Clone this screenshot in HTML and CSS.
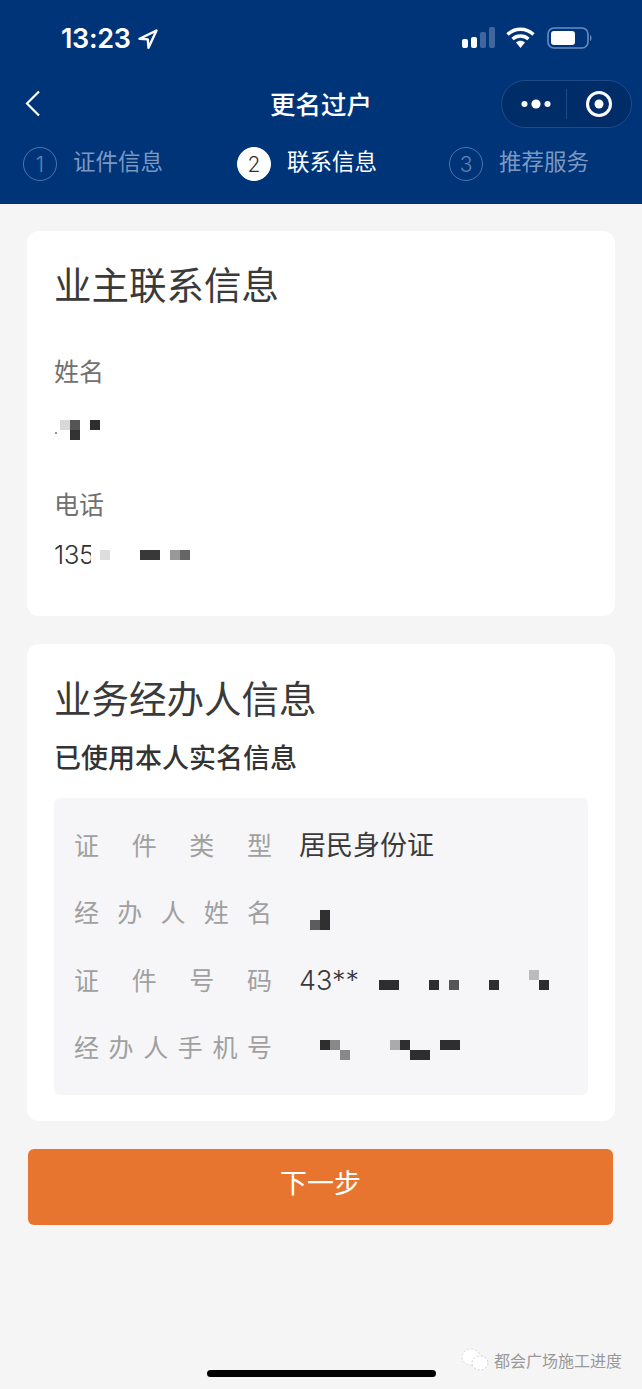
FILE: index.html
```html
<!DOCTYPE html>
<html lang="zh-CN">
<head>
    <meta charset="UTF-8">
    <meta name="viewport" content="width=device-width, initial-scale=1.0">
    <title>更名过户</title>
    <link rel="stylesheet" href="styles.css">
</head>
<body>
    <div class="page">
        <header class="header">
            <div class="status">
                <div class="status-left">
                    <span class="time">13:23</span>
                    <svg class="arrow" width="20" height="20" viewBox="0 0 20 20"><path d="M18.500 1.500 L1.500 9.800 L9.800 10.400 L10.500 18.800 Z" fill="none" stroke="#fff" stroke-width="2.400" stroke-linejoin="round"/></svg>
                </div>
                <div class="status-right">
                    <svg width="33" height="21" viewBox="0 0 33 21">
                        <rect x="0" y="12" width="6" height="9" rx="2" fill="#fff"/>
                        <rect x="9" y="10" width="6" height="11" rx="2" fill="#fff"/>
                        <rect x="18" y="5" width="6" height="16" rx="2" fill="#41669e"/>
                        <rect x="27" y="0" width="6" height="21" rx="2" fill="#41669e"/>
                    </svg>
                    <svg class="wifi" width="29" height="21" viewBox="0 0 29 21">
                        <path d="M1.500 7.500 C9 0.500 20 0.500 27.500 7.500" fill="none" stroke="#fff" stroke-width="3.400"/>
                        <path d="M6.500 12 C11 8 18 8 22.500 12" fill="none" stroke="#fff" stroke-width="3.400"/>
                        <path d="M10 15.500 C12.500 13.200 16.500 13.200 19 15.500 L14.500 21 Z" fill="#fff"/>
                    </svg>
                    <svg class="battery" width="46" height="22" viewBox="0 0 46 22">
                        <rect x="1" y="1" width="40" height="20" rx="6" fill="none" stroke="#6b8dbd" stroke-width="1.600"/>
                        <rect x="4" y="4" width="24" height="14" rx="3" fill="#fff"/>
                        <path d="M43 8 C45 9 45 13 43 14 Z" fill="#6b8dbd"/>
                    </svg>
                </div>
            </div>
            <div class="nav">
                <svg class="back" width="16" height="27" viewBox="0 0 16 27"><path d="M14 1.500 L2 13.500 L14 25.500" fill="none" stroke="#fff" stroke-width="2.200"/></svg>
                <div class="nav-title">更名过户</div>
                <div class="capsule">
                    <svg width="30" height="10" viewBox="0 0 30 10">
                        <circle cx="3.500" cy="5" r="3" fill="#fff"/>
                        <circle cx="15" cy="5" r="4.600" fill="#fff"/>
                        <circle cx="26.500" cy="5" r="3" fill="#fff"/>
                    </svg>
                    <span class="capsule-line"></span>
                    <svg width="28" height="28" viewBox="0 0 28 28">
                        <circle cx="14" cy="14" r="11.500" fill="none" stroke="#fff" stroke-width="3"/>
                        <circle cx="14" cy="14" r="4.500" fill="#fff"/>
                    </svg>
                </div>
            </div>
            <div class="steps">
                <div class="step"><span class="step-num">1</span><span class="step-text">证件信息</span></div>
                <div class="step active"><span class="step-num">2</span><span class="step-text">联系信息</span></div>
                <div class="step"><span class="step-num">3</span><span class="step-text">推荐服务</span></div>
            </div>
        </header>

        <main class="content">
            <section class="card card-owner">
                <h2 class="card-title">业主联系信息</h2>
                <div class="field-label">姓名</div>
                <div class="field-value name-value">
                    <svg width="50" height="24" viewBox="0 0 50 24">
                        <rect x="0" y="14" width="2" height="2" fill="#999"/>
                        <rect x="5" y="2" width="10" height="10" fill="#d8d8d8"/>
                        <rect x="15" y="2" width="10" height="10" fill="#555"/>
                        <rect x="15" y="12" width="10" height="10" fill="#333"/>
                        <rect x="35" y="2" width="10" height="10" fill="#2e2e2e"/>
                    </svg>
                </div>
                <div class="field-label">电话</div>
                <div class="field-value phone-value">
                    <span class="phone-num">135</span>
                    <svg class="phone-mosaic" width="110" height="26" viewBox="0 0 110 26">
                        <rect x="0" y="0" width="8" height="26" fill="#fff"/>
                        <rect x="9" y="8" width="10" height="10" fill="#ddd"/>
                        <rect x="49" y="8" width="20" height="10" fill="#383838"/>
                        <rect x="79" y="8" width="10" height="10" fill="#999"/>
                        <rect x="89" y="8" width="10" height="10" fill="#666"/>
                    </svg>
                </div>
            </section>

            <section class="card card-agent">
                <h2 class="card-title">业务经办人信息</h2>
                <div class="realname">已使用本人实名信息</div>
                <div class="info-box">
                    <div class="info-row">
                        <span class="info-label">证件类型</span>
                        <span class="info-value">居民身份证</span>
                    </div>
                    <div class="info-row">
                        <span class="info-label">经办人姓名</span>
                        <svg class="mosaic" width="260" height="40" viewBox="0 0 260 40">
                            <rect x="21" y="17" width="10" height="20" fill="#303030"/>
                            <rect x="11" y="27" width="10" height="10" fill="#5c5c5c"/>
                        </svg>
                    </div>
                    <div class="info-row">
                        <span class="info-label">证件号码</span>
                        <span class="info-value id-start">43**</span>
                        <svg class="mosaic id-mosaic" width="200" height="40" viewBox="0 0 200 40">
                            <rect x="22" y="19" width="20" height="10" fill="#2e2e2e"/>
                            <rect x="72" y="19" width="10" height="10" fill="#2e2e2e"/>
                            <rect x="92" y="19" width="10" height="10" fill="#555"/>
                            <rect x="132" y="19" width="10" height="10" fill="#2e2e2e"/>
                            <rect x="172" y="9" width="10" height="10" fill="#bbb"/>
                            <rect x="182" y="19" width="10" height="10" fill="#2e2e2e"/>
                        </svg>
                    </div>
                    <div class="info-row">
                        <span class="info-label">经办人手机号</span>
                        <svg class="mosaic" width="260" height="40" viewBox="0 0 260 40">
                            <rect x="21" y="12" width="10" height="10" fill="#2e2e2e"/>
                            <rect x="31" y="12" width="10" height="10" fill="#888"/>
                            <rect x="41" y="22" width="10" height="10" fill="#888"/>
                            <rect x="91" y="12" width="10" height="10" fill="#aaa"/>
                            <rect x="101" y="12" width="10" height="10" fill="#2e2e2e"/>
                            <rect x="111" y="22" width="20" height="10" fill="#2e2e2e"/>
                            <rect x="141" y="12" width="20" height="10" fill="#2e2e2e"/>
                        </svg>
                    </div>
                </div>
            </section>

            <button class="next-btn">下一步</button>
        </main>

        <div class="watermark">
            <svg width="30" height="26" viewBox="0 0 30 26">
                <ellipse cx="11" cy="10" rx="9" ry="8" fill="#fff" stroke="#d6d6d6" stroke-width="1" stroke-dasharray="2 2"/>
                <ellipse cx="20" cy="16" rx="8" ry="7" fill="#fff" stroke="#cfcfcf" stroke-width="1" stroke-dasharray="2 2"/>
            </svg>
            <span>都会广场施工进度</span>
        </div>
        <div class="home-bar"></div>
    </div>
</body>
</html>
```

FILE: styles.css
```css
* {
    box-sizing: border-box;
}
body {
    margin: 0;
    font-family: Inter, "Noto Sans CJK SC", sans-serif;
    background-color: #f5f5f5;
    color: #333;
}
.page {
    position: relative;
    height: 1389px;
    overflow: hidden;
}
.header {
    height: 204px;
    background-color: #003478;
    color: #fff;
}
.status {
    height: 79px;
    padding: 25px 49px 0 61px;
    display: flex;
    justify-content: space-between;
    align-items: flex-start;
}
.status-left {
    display: flex;
    align-items: center;
    gap: 7px;
}
.time {
    font-size: 27px;
    font-weight: 600;
    line-height: 27px;
    letter-spacing: -0.3px;
}
.status-right {
    display: flex;
    align-items: flex-start;
    margin-top: 2px;
}
.wifi {
    margin-left: 11px;
}
.battery {
    margin-left: 12px;
}
.nav {
    height: 48px;
    display: grid;
    grid-template-columns: 1fr auto 1fr;
    align-items: center;
    padding: 0 10px 0 25px;
}
.back {
    margin-top: -1px;
}
.nav-title {
    font-size: 25.500px;
    font-weight: 500;
    line-height: 48px;
    padding: 2px 15px 0 0;
}
.capsule {
    justify-self: end;
    width: 131px;
    height: 48px;
    border-radius: 24px;
    background-color: #002c68;
    border: 1px solid #1f4c88;
    display: flex;
    align-items: center;
    padding-left: 19px;
}
.capsule-line {
    width: 1px;
    height: 30px;
    background-color: #1f4c88;
    margin: 0 18px 0 15px;
}
.steps {
    display: grid;
    grid-template-columns: 214px 212px 1fr;
    padding: 20px 0 0 23px;
}
.step {
    display: flex;
    align-items: center;
    gap: 16px;
    color: #7c98c0;
}
.step-num {
    width: 34px;
    height: 34px;
    border-radius: 50%;
    border: 1px solid #4f74a8;
    font-size: 21px;
    font-weight: 300;
    display: flex;
    align-items: center;
    justify-content: center;
    color: #6583b0;
    flex-shrink: 0;
}
.step-text {
    font-size: 22.500px;
    line-height: 30px;
    margin-top: -5px;
}
.step.active {
    color: #fff;
}
.step.active .step-num {
    background-color: #fff;
    border-color: #fff;
    color: #333;
}
.content {
    padding: 27px 27px 0;
}
.card {
    background-color: #fff;
    border-radius: 12px;
    padding: 0 27px;
    overflow: hidden;
}
.card-owner {
    height: 385px;
    padding-top: 30px;
}
.card-agent {
    height: 477px;
    margin-top: 28px;
    padding-top: 31px;
}
.card-title {
    margin: 0;
    font-size: 37.500px;
    font-weight: 400;
    line-height: 50px;
    color: #3a3a3a;
}
.field-label {
    font-size: 25px;
    line-height: 36px;
    color: #707070;
    margin-top: 43px;
}
.field-value {
    height: 34px;
    margin-top: 26px;
    display: flex;
    align-items: center;
    color: #333;
}
.field-label + .phone-value {
    margin-top: 15px;
}
.card-owner .field-value + .field-label {
    margin-top: 37px;
}
.name-value svg {
    margin: -6px 0 0 1px;
}
.phone-num {
    font-size: 26px;
    font-weight: 300;
    line-height: 34px;
    letter-spacing: -0.5px;
}
/* white strip hides the end of the last digit, as in the blurred original */
.phone-mosaic {
    margin-left: -3px;
    flex-shrink: 0;
}
.realname {
    font-size: 27px;
    font-weight: 500;
    line-height: 36px;
    margin-top: 16px;
    color: #333;
}
.info-box {
    margin-top: 21px;
    height: 297px;
    background-color: #f6f6f8;
    border-radius: 6px;
    padding: 12px 20px 0;
}
.info-row {
    height: 67.500px;
    display: flex;
    align-items: center;
}
.info-label {
    width: 198px;
    flex-shrink: 0;
    font-size: 25px;
    color: #a0a0a0;
    text-align-last: justify;
    margin-right: 27px;
}
.info-value {
    font-size: 27px;
    color: #3a3a3a;
}
.mosaic {
    margin-top: 4px;
}
.id-start {
    font-weight: 300;
    margin-top: 4px;
}
.id-mosaic {
    margin-left: -2px;
}
.next-btn {
    display: block;
    width: 585px;
    height: 76px;
    margin: 28px 0 0 1px;
    padding: 0 0 12px;
    border: none;
    border-radius: 6px;
    background-color: #e8752f;
    color: #fff;
    font-family: inherit;
    font-size: 27px;
}
.watermark {
    position: absolute;
    right: 20px;
    bottom: 16px;
    display: flex;
    align-items: center;
    gap: 4px;
    font-size: 16px;
    color: #999;
}
.home-bar {
    position: absolute;
    left: 207px;
    bottom: 12px;
    width: 229px;
    height: 7px;
    border-radius: 4px;
    background-color: #000;
}
```
